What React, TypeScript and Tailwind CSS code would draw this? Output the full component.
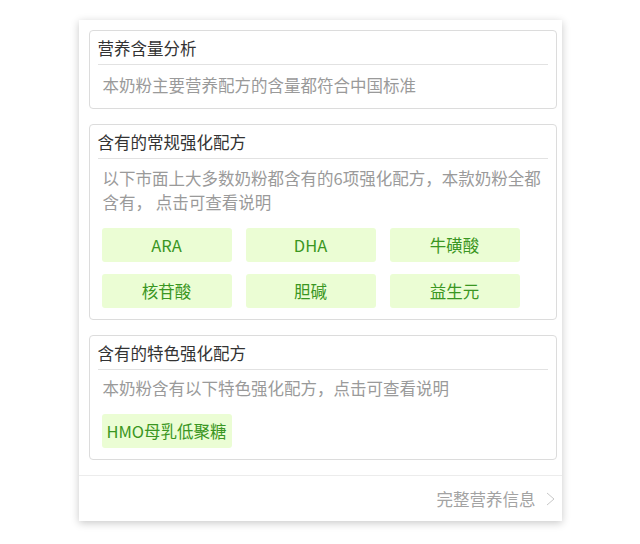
const common = ["ARA", "DHA", "牛磺酸", "核苷酸", "胆碱", "益生元"];
const special = ["HMO母乳低聚糖"];

function Section({ title, children }: { title: string; children: React.ReactNode }) {
  return (
    <div className="rounded-[4px] border border-[#dcdcdc] px-[8px]">
      <div className="flex h-[33px] items-center text-[#333]">{title}</div>
      <div className="border-t border-[#e2e2e2]" />
      {children}
    </div>
  );
}

function Chip({ label }: { label: string }) {
  return (
    <div className="flex h-[34px] w-[130px] items-center justify-center rounded-[3px] bg-[#ebfdd4] text-[#3a9622] whitespace-nowrap">
      {label}
    </div>
  );
}

export default function App() {
  return (
    <div
      className="min-h-screen bg-white pt-[20px] text-[16.5px] leading-[24px]"
      style={{ fontFamily: '"Noto Sans CJK SC", "Noto Sans", sans-serif' }}
    >
      <div className="mx-auto w-[483px] bg-white shadow-[0_2px_8px_rgba(0,0,0,0.22)]">
        <div className="flex flex-col gap-[15px] pl-[10px] pr-[5px] pt-[10px]">
          <Section title="营养含量分析">
            <p className="pl-[5px] pt-[8px] pb-[11px] text-[#9a9a9a]">本奶粉主要营养配方的含量都符合中国标准</p>
          </Section>

          <Section title="含有的常规强化配方">
            <p className="pl-[5px] pr-[2px] pt-[7px] text-[#9a9a9a]">
              以下市面上大多数奶粉都含有的6项强化配方，本款奶粉全都含有， 点击可查看说明
            </p>
            <div className="grid grid-cols-[130px_130px_130px] gap-x-[14px] gap-y-[12px] pl-[4px] pt-[14px] pb-[11px]">
              {common.map((c) => (
                <Chip key={c} label={c} />
              ))}
            </div>
          </Section>

          <Section title="含有的特色强化配方">
            <p className="pl-[5px] pt-[6px] text-[#9a9a9a]">本奶粉含有以下特色强化配方，点击可查看说明</p>
            <div className="flex pl-[4px] pt-[14px] pb-[11px]">
              {special.map((c) => (
                <Chip key={c} label={c} />
              ))}
            </div>
          </Section>
        </div>

        <div className="mt-[15px] flex h-[46px] items-center justify-end border-t border-[#ececec] pr-[7px] text-[#a3a3a3]">
          <span>完整营养信息</span>
          <svg width="9" height="14" viewBox="0 0 9 14" className="ml-[10px]" fill="none">
            <polyline points="1,1 8,7 1,13" stroke="#c8c8c8" strokeWidth="1" />
          </svg>
        </div>
      </div>
    </div>
  );
}
